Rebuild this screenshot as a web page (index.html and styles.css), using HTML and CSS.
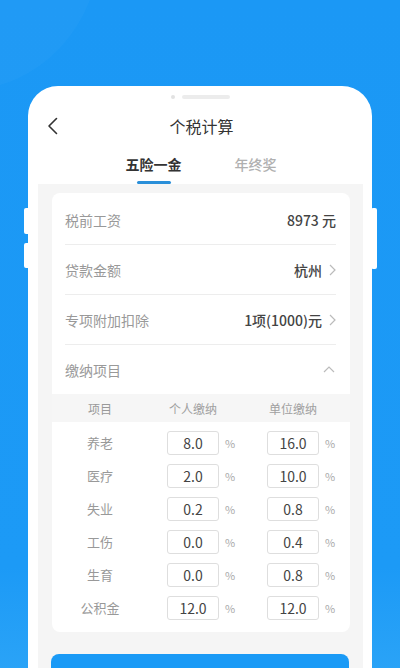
FILE: index.html
```html
<!DOCTYPE html>
<html lang="zh-CN">
<head>
  <meta charset="UTF-8" />
  <meta name="viewport" content="width=device-width, initial-scale=1.0"/>
  <title>个税计算</title>
  <link rel="stylesheet" href="styles.css">
</head>
<body>
  <div class="bg-circle"></div>
  <div class="phone">
    <div class="side-btn side-left-1"></div>
    <div class="side-btn side-left-2"></div>
    <div class="side-btn side-right"></div>

    <div class="speaker">
      <span class="cam"></span>
      <span class="slot"></span>
    </div>

    <div class="header">
      <svg class="back" width="11" height="18" viewBox="0 0 11 18">
        <path d="M9.5 1.5 L2 9 L9.5 16.5" fill="none" stroke="#333" stroke-width="1.6" stroke-linecap="round" stroke-linejoin="round"/>
      </svg>
      <div class="title">个税计算</div>
    </div>

    <div class="tabs">
      <div class="tab active">五险一金<span class="tab-line"></span></div>
      <div class="tab">年终奖</div>
    </div>

    <div class="panel">
      <div class="card">
        <div class="row">
          <span class="label">税前工资</span>
          <span class="value">8973 元</span>
        </div>
        <div class="row">
          <span class="label">贷款金额</span>
          <span class="value"><span>杭州</span><svg class="arrow" width="7" height="12" viewBox="0 0 7 12"><path d="M1 1 L6 6 L1 11" fill="none" stroke="#bbb" stroke-width="1.2"/></svg></span>
        </div>
        <div class="row">
          <span class="label">专项附加扣除</span>
          <span class="value"><span>1项(1000)元</span><svg class="arrow" width="7" height="12" viewBox="0 0 7 12"><path d="M1 1 L6 6 L1 11" fill="none" stroke="#bbb" stroke-width="1.2"/></svg></span>
        </div>
        <div class="row last">
          <span class="label">缴纳项目</span>
          <svg class="up" width="12" height="7" viewBox="0 0 12 7"><path d="M1 6 L6 1 L11 6" fill="none" stroke="#bbb" stroke-width="1.2"/></svg>
        </div>

        <div class="grid grid-head">
          <span class="c1">项目</span>
          <span class="head-cell">个人缴纳</span>
          <span class="head-cell">单位缴纳</span>
        </div>

        <div class="rates">
          <div class="grid">
            <span class="c1">养老</span>
            <span class="cell"><span class="box">8.0</span><span class="pct">%</span></span>
            <span class="cell"><span class="box">16.0</span><span class="pct">%</span></span>
          </div>
          <div class="grid">
            <span class="c1">医疗</span>
            <span class="cell"><span class="box">2.0</span><span class="pct">%</span></span>
            <span class="cell"><span class="box">10.0</span><span class="pct">%</span></span>
          </div>
          <div class="grid">
            <span class="c1">失业</span>
            <span class="cell"><span class="box">0.2</span><span class="pct">%</span></span>
            <span class="cell"><span class="box">0.8</span><span class="pct">%</span></span>
          </div>
          <div class="grid">
            <span class="c1">工伤</span>
            <span class="cell"><span class="box">0.0</span><span class="pct">%</span></span>
            <span class="cell"><span class="box">0.4</span><span class="pct">%</span></span>
          </div>
          <div class="grid">
            <span class="c1">生育</span>
            <span class="cell"><span class="box">0.0</span><span class="pct">%</span></span>
            <span class="cell"><span class="box">0.8</span><span class="pct">%</span></span>
          </div>
          <div class="grid">
            <span class="c1">公积金</span>
            <span class="cell"><span class="box">12.0</span><span class="pct">%</span></span>
            <span class="cell"><span class="box">12.0</span><span class="pct">%</span></span>
          </div>
        </div>
      </div>

      <button class="calc">开始计算</button>
    </div>
  </div>
</body>
</html>
```

FILE: styles.css
```css
* {
  box-sizing: border-box;
}
html, body {
  height: 668px;
  overflow: hidden;
}
body {
  margin: 0;
  background: linear-gradient(180deg, #1b98f5 0%, #1c9af6 85%, #2aa3f7 100%);
  font-family: "Noto Sans CJK SC", "Noto Sans", sans-serif;
  position: relative;
}
.bg-circle {
  position: absolute;
  left: -170px;
  top: -200px;
  width: 270px;
  height: 290px;
  border-radius: 50%;
  background: rgba(255, 255, 255, 0.025);
}
.phone {
  position: relative;
  margin: 86px 0 0 28px;
  width: 344px;
  height: 600px;
  background: #fff;
  border-radius: 30px 30px 0 0;
  padding-top: 9px;
}
.side-btn {
  position: absolute;
  width: 6px;
  background: #fff;
  border-radius: 2px;
}
.side-left-1 {
  left: -4px;
  top: 122px;
  height: 26px;
}
.side-left-2 {
  left: -4px;
  top: 157px;
  height: 25px;
}
.side-right {
  right: -5px;
  top: 122px;
  height: 61px;
}
.speaker {
  display: flex;
  align-items: center;
  height: 4px;
  padding-left: 143px;
  gap: 7px;
}
.cam {
  width: 4px;
  height: 4px;
  border-radius: 50%;
  background: #e2e2e2;
}
.slot {
  width: 48px;
  height: 4px;
  border-radius: 2px;
  background: #ececec;
}
.header {
  height: 40px;
  margin-top: 7px;
  display: flex;
  align-items: center;
  justify-content: center;
  position: relative;
}
.back {
  position: absolute;
  left: 19px;
  top: 11px;
}
.title {
  font-size: 16px;
  color: #333;
  font-weight: 400;
  padding-left: 3px;
}
.tabs {
  display: flex;
  justify-content: center;
  gap: 53px;
  padding-top: 8px;
  height: 38px;
  padding-left: 2px;
}
.tab {
  font-size: 14px;
  line-height: 20px;
  color: #b0b0b0;
  font-weight: 500;
  display: flex;
  flex-direction: column;
  align-items: center;
}
.tab.active {
  color: #333;
  font-weight: 700;
}
.tab-line {
  width: 34px;
  height: 3px;
  border-radius: 2px;
  background: #2a8fd9;
  margin-top: 7px;
}
.panel {
  margin: 0 9px 0 10px;
  background: #f5f5f5;
  padding: 9px 13px 0 14px;
  height: 500px;
}
.card {
  background: #fff;
  border-radius: 8px;
  overflow: hidden;
  padding-bottom: 8px;
  padding-top: 1px;
}
.row {
  margin: 0 14px 0 13px;
  height: 50px;
  border-bottom: 1px solid #ededed;
  display: flex;
  align-items: center;
  justify-content: space-between;
  font-size: 14px;
}
.row:first-child {
  height: 51px;
  padding-top: 2px;
}
.row.last {
  border-bottom: none;
  height: 49px;
}
.label {
  color: #999;
}
.value {
  color: #444;
  font-weight: 500;
  display: flex;
  align-items: center;
  gap: 7px;
}
.arrow {
  margin-top: 1px;
}
.up {
  margin-right: 1px;
}
.grid {
  display: grid;
  grid-template-columns: 115px 100px 100px;
  align-items: center;
  height: 33px;
}
.grid-head {
  background: #f6f6f6;
  height: 28px;
  font-size: 12px;
  color: #a0a0a0;
}
.c1 {
  padding-right: 19px;
  text-align: center;
  font-size: 13px;
  color: #999;
}
.grid-head .c1 {
  font-size: 12px;
}
.head-cell {
  width: 52px;
  text-align: center;
  white-space: nowrap;
}
.rates {
  padding-top: 4px;
}
.cell {
  display: flex;
  align-items: center;
}
.box {
  width: 52px;
  height: 24px;
  border: 1px solid #dedede;
  border-radius: 3px;
  text-align: center;
  font-size: 14px;
  line-height: 22px;
  color: #444;
}
.pct {
  margin-left: 6px;
  font-size: 11px;
  color: #aaa;
}
.calc {
  display: block;
  width: 100%;
  margin-top: 22px;
  height: 44px;
  border: none;
  border-radius: 8px;
  background: #1a9af6;
  color: #fff;
  font-family: inherit;
  font-size: 15px;
  margin-left: -1px;
}
```
